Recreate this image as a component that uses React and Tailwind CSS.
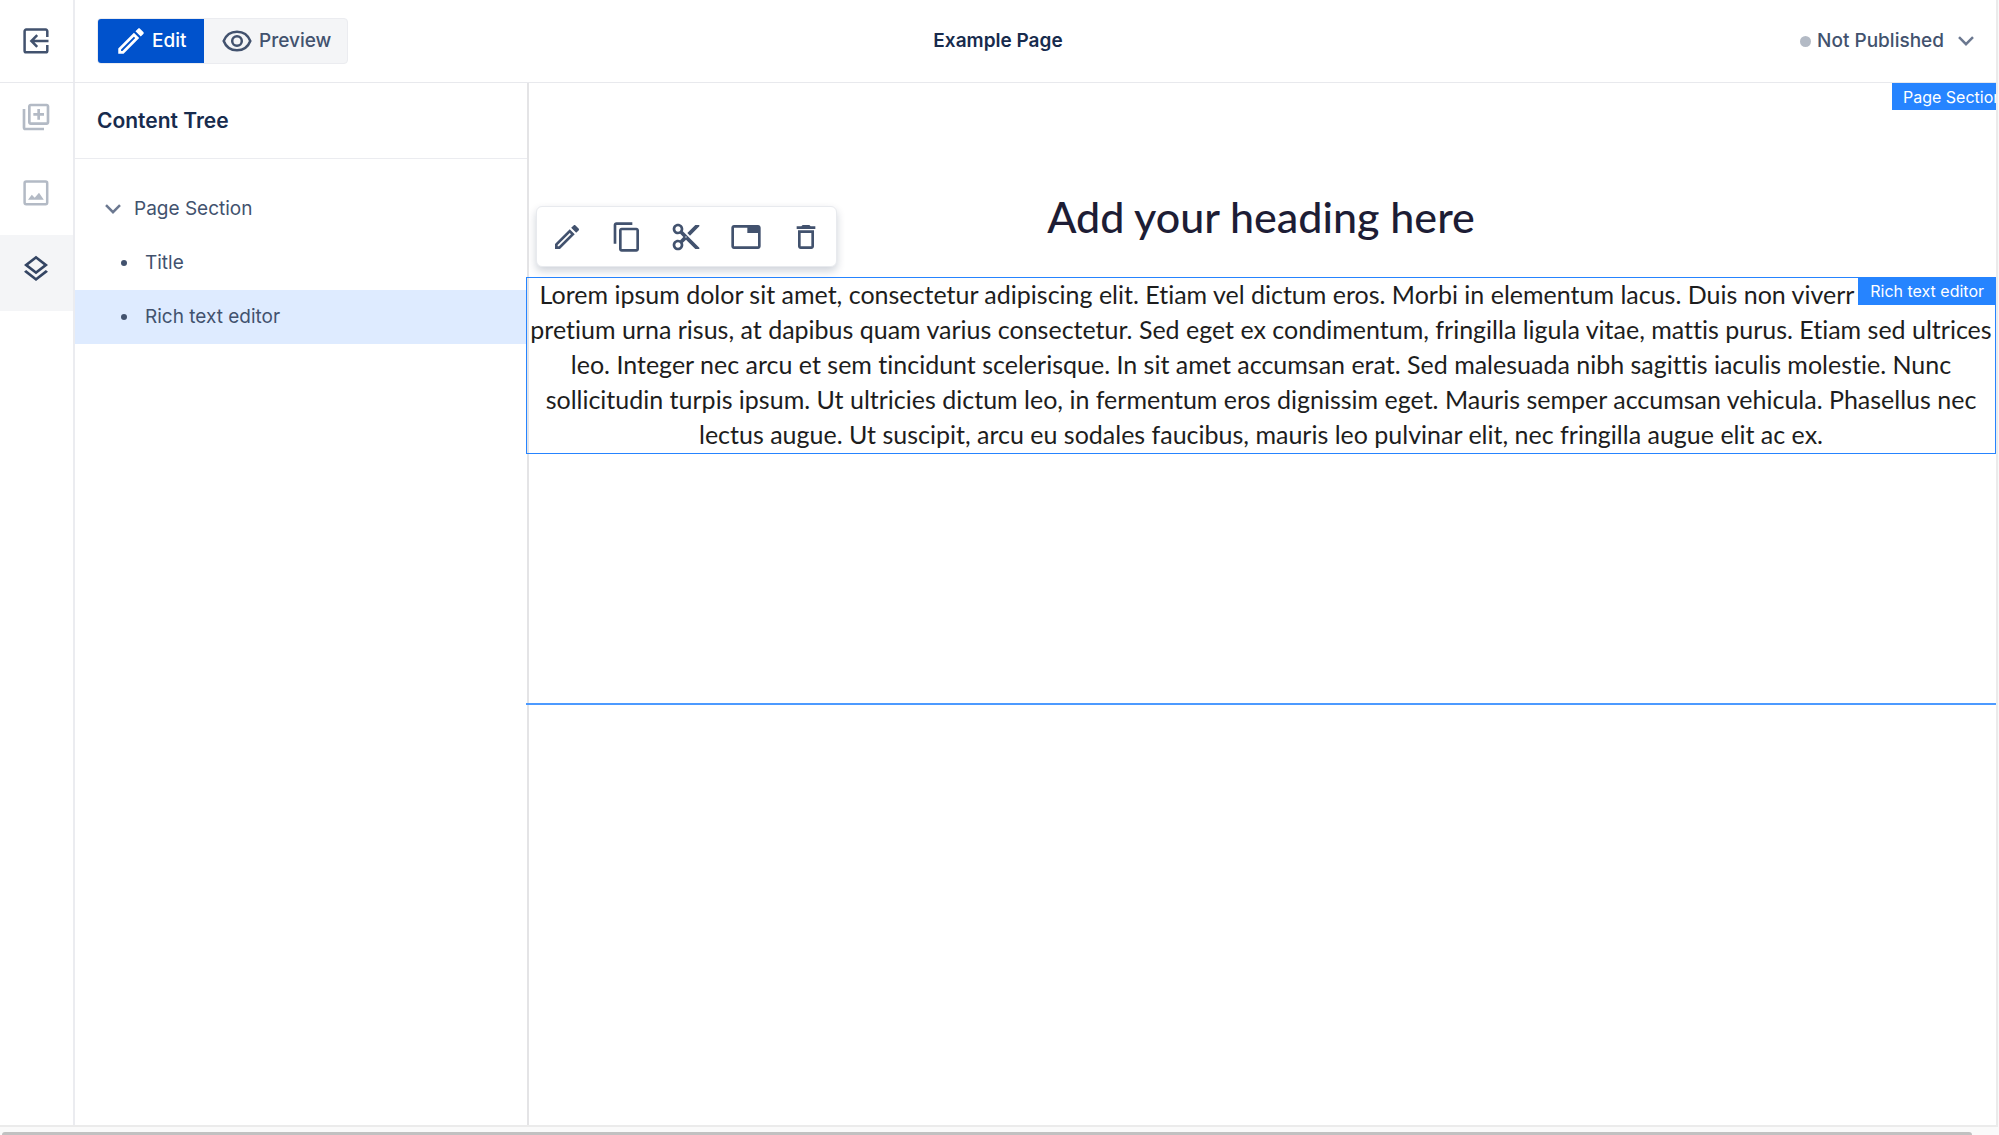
import { MdOutlineEdit, MdContentCopy, MdContentCut, MdOutlineTab, MdDeleteOutline, MdOutlineLayers, MdOutlineLibraryAdd } from "react-icons/md";

const ExitIcon = () => (
  <svg viewBox="0 0 26 26" className="size-[26px]" fill="none" stroke="currentColor" strokeWidth="2.5" aria-hidden="true">
    <path d="M24.3 9V3.2a1.6 1.6 0 0 0-1.6-1.6H3.2a1.6 1.6 0 0 0-1.6 1.6v19.5a1.6 1.6 0 0 0 1.6 1.6h19.5a1.6 1.6 0 0 0 1.6-1.6V17" />
    <path d="M25.5 13H9M14.2 7.2 8.4 13l5.8 5.8" />
  </svg>
);

const ImageIcon = () => (
  <svg viewBox="0 0 26 26" className="size-[26px]" fill="none" aria-hidden="true">
    <rect x="1.6" y="1.6" width="22.6" height="22.6" rx="1.6" stroke="currentColor" strokeWidth="2.5" />
    <path d="M5 19.8l3.800-5 2.900 3 4.300-5 4.800 7z" fill="currentColor" />
  </svg>
);

const EyeIcon = () => (
  <svg viewBox="0 0 30 22" className="h-[22px] w-[30px]" fill="none" stroke="currentColor" strokeWidth="2.5" aria-hidden="true">
    <path d="M1.700 11C4 5 9 1.700 15 1.700S26 5 28.300 11C26 17 21 20.300 15 20.300S4 17 1.700 11Z" />
    <circle cx="15" cy="11" r="4.800" />
  </svg>
);

const Chevron = () => (
  <svg viewBox="0 0 16 10" className="h-[10px] w-4 text-[#6b7890]" fill="none" stroke="currentColor" strokeWidth="2.5" aria-hidden="true">
    <path d="M1 1.200 8 8.200l7-7" />
  </svg>
);

const rail = [
  { label: "Add component", icon: <MdOutlineLibraryAdd className="size-[32px]" /> },
  { label: "Assets", icon: <ImageIcon /> },
  { label: "Content tree", icon: <MdOutlineLayers className="size-[32px]" />, active: true },
];

const tools = [
  { label: "Edit", icon: <MdOutlineEdit className="size-[32px]" /> },
  { label: "Copy", icon: <MdContentCopy className="size-[32px]" /> },
  { label: "Cut", icon: <MdContentCut className="size-[32px]" /> },
  { label: "Placeholder", icon: <MdOutlineTab className="size-[32px]" /> },
  { label: "Delete", icon: <MdDeleteOutline className="size-[32px]" /> },
];

function TreeItem({ children, selected }) {
  return (
    <li>
      <button className={`flex h-[54px] w-full items-center gap-[18px] pl-[46px] ${selected ? "bg-[#deebff]" : ""}`}>
        <span className="size-[6px] rounded-full bg-[#42526e]" />
        {children}
      </button>
    </li>
  );
}

export default function App() {
  return (
    <div className="flex h-screen flex-col overflow-hidden bg-[#fafafa] font-['Inter',sans-serif] text-[#42526e]">
      <div className="mr-px flex min-h-0 flex-1 flex-col border-r-2 border-b-2 border-[#ebebeb] bg-white">
        <header className="grid h-[83px] shrink-0 grid-cols-[1fr_auto_1fr] border-b border-[#e8e9ed] text-[19px]">
          <div className="flex items-center">
            <div className="mr-[22px] flex w-[75px] shrink-0 items-center justify-center self-stretch border-r-2 border-[#ebecf0] pr-0.5">
              <button aria-label="Exit"><ExitIcon /></button>
            </div>
            <div className="flex h-[46px] w-fit overflow-hidden rounded-[4px] border border-[#ebecf0] bg-[#f4f5f7] font-medium">
              <button className="flex w-[106px] items-center gap-1 bg-[#0052cc] pl-[16px] text-white">
                <MdOutlineEdit className="size-[34px]" />Edit
              </button>
              <button className="flex w-[143px] items-center gap-[7px] pl-[18px]"><EyeIcon />Preview</button>
            </div>
          </div>
          <h1 className="self-center font-semibold text-[#172b4d]">Example Page</h1>
          <button className="mr-[22px] flex items-center justify-self-end font-medium">
            <span className="mr-[6px] size-[11px] rounded-full bg-[#b3bac5]" />
            Not Published
            <span className="ml-[14px]"><Chevron /></span>
          </button>
        </header>
        <div className="flex min-h-0 flex-1">
          <nav className="w-[75px] shrink-0 border-r-2 border-[#ebecf0]">
            {rail.map((r) => (
              <button key={r.label} aria-label={r.label} className={`flex h-[76px] w-full items-center justify-center pr-0.5 pb-2 ${r.active ? "bg-[#f4f5f7] text-[#344563]" : "text-[#b3bac5]"}`}>
                {r.icon}
              </button>
            ))}
          </nav>
          <aside className="w-[454px] shrink-0 border-r-2 border-[#e4e4e6] text-[19px]">
            <h2 className="flex h-[76px] items-center border-b border-[#ebecf0] pl-[22px] text-[21px] font-semibold text-[#172b4d]">Content Tree</h2>
            <ul className="pt-[23px]">
              <li>
                <button className="flex h-[54px] w-full items-center gap-[13px] pl-[30px]"><Chevron />Page Section</button>
              </li>
              <TreeItem>Title</TreeItem>
              <TreeItem selected>Rich text editor</TreeItem>
            </ul>
          </aside>
          <main className="relative -ml-[3px] min-w-0 flex-1">
            <section className="relative h-[622px] overflow-hidden border-b-2 border-[#4c9aff] pt-[102px]">
              <span className="absolute top-0 right-0 flex h-[27px] w-[104px] items-center overflow-hidden bg-[#2684ff] pl-[11px] text-[16px] whitespace-nowrap text-white">Page Section</span>
              <h2 className="h-[92px] text-center font-['Lato',sans-serif] text-[43px] leading-[64px] font-medium text-[#1d1d35]">Add your heading here</h2>
              <div className="relative pb-[2px] font-['Lato',sans-serif] text-[25px] leading-[35px] text-[#1d1d1d] outline -outline-offset-1 outline-[#2684ff] [font-variant-ligatures:none]">
                <div role="toolbar" aria-label="Component actions" className="absolute bottom-full left-[10px] mb-[10px] flex h-[61px] w-[301px] items-center justify-around rounded-[6px] border border-[#e8eaee] bg-white text-[#42526e] shadow-[0_4px_8px_rgba(9,30,66,0.2)]">
                  {tools.map((t) => <button key={t.label} aria-label={t.label}>{t.icon}</button>)}
                </div>
                <p className="text-center whitespace-nowrap">
                  Lorem ipsum dolor sit amet, consectetur adipiscing elit. Etiam vel dictum eros. Morbi in elementum lacus. Duis non viverr<span className="inline-block w-[128px]" /><br />
                  pretium urna risus, at dapibus quam varius consectetur. Sed eget ex condimentum, fringilla ligula vitae, mattis purus. Etiam sed ultrices<br />
                  leo. Integer nec arcu et sem tincidunt scelerisque. In sit amet accumsan erat. Sed malesuada nibh sagittis iaculis molestie. Nunc<br />
                  sollicitudin turpis ipsum. Ut ultricies dictum leo, in fermentum eros dignissim eget. Mauris semper accumsan vehicula. Phasellus nec<br />
                  lectus augue. Ut suscipit, arcu eu sodales faucibus, mauris leo pulvinar elit, nec fringilla augue elit ac ex.
                </p>
                <span className="absolute top-0 right-0 flex h-[28px] items-center bg-[#2684ff] px-[12px] font-['Inter',sans-serif] text-[16px] whitespace-nowrap text-white">Rich text editor</span>
              </div>
            </section>
          </main>
        </div>
      </div>
      <div className="h-[8px] shrink-0 pt-[5px] pl-[2px]">
        <div className="mr-[27px] h-[3px] rounded-t-full bg-[#c1c1c1]" />
      </div>
    </div>
  );
}
